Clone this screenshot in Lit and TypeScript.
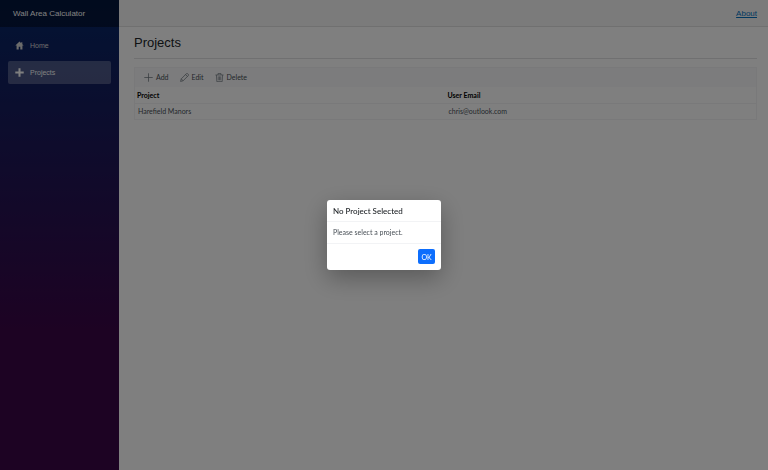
import { LitElement, html, css, svg } from "lit";
import { customElement, state } from "lit/decorators.js";

interface Project {
  name: string;
  email: string;
}

const icons = {
  home: svg`<path d="M8 1 0.6 8h2.2v7h3.8v-4.6h2.8V15h3.8V8h2.2L13 5.6V2h-2v1.8z" fill="currentColor"/>`,
  plus: svg`<path d="M6.2 0.500h3.6v5.7h5.700v3.6H9.800V15.500H6.200V9.800H0.500V6.200h5.700z" fill="currentColor"/>`,
  add: svg`<path d="M8 0.500v15M0.500 8h15" stroke="currentColor" stroke-width="1.300" fill="none"/>`,
  edit: svg`<path d="M1 15l1.200-4.600L11.400 1.200a1.500 1.500 0 0 1 2.100 0l1.300 1.300a1.500 1.500 0 0 1 0 2.100L5.600 13.800zM9.800 2.800l3.400 3.400M2.200 10.400l3.400 3.400" stroke="currentColor" stroke-width="1.300" fill="none"/>`,
  trash: svg`<path d="M0.800 3.500h14.400M5.300 3.500V1h5.400v2.500M2.500 3.500l.7 11.800h9.600l.7-11.800M5.800 6v7M8 6v7M10.200 6v7" stroke="currentColor" stroke-width="1.200" fill="none"/>`,
};

const icon = (shape: unknown) =>
  html`<svg viewBox="0 0 16 16" aria-hidden="true">${shape}</svg>`;

@customElement("app-root")
export class AppRoot extends LitElement {
  @state() private dialogOpen = true;

  private projects: Project[] = [
    { name: "Harefield Manors", email: "chris@outlook.com" },
  ];

  static styles = css`
    :host {
      display: grid;
      grid-template-columns: 119px 1fr;
      min-height: 100vh;
      background: #fff;
      color: #212529;
      font: 7px/10px "Liberation Sans", Arial, sans-serif;
    }
    * {
      box-sizing: border-box;
    }
    svg {
      display: block;
      flex: none;
      width: 9px;
      height: 9px;
    }
    .sidebar {
      background: linear-gradient(180deg, #052767 0%, #3a0647 70%);
    }
    .brand {
      display: flex;
      align-items: center;
      height: 27px;
      padding: 0 13px;
      background: rgba(0, 0, 0, 0.4);
    }
    .brand a {
      color: #fff;
      font-size: 8px;
      text-decoration: none;
    }
    .nav {
      display: flex;
      flex-direction: column;
      gap: 4px;
      padding: 7px 8px;
    }
    .nav a {
      display: flex;
      align-items: center;
      gap: 6px;
      height: 23px;
      padding: 0 7px;
      border-radius: 2px;
      color: #d7d7d7;
      text-decoration: none;
    }
    .nav a.active {
      background: rgba(255, 255, 255, 0.25);
      color: #fff;
    }
    .topbar {
      display: flex;
      align-items: center;
      justify-content: flex-end;
      height: 27px;
      padding: 2px 11px 0;
      background: #f7f7f7;
      border-bottom: 1px solid #e0e0e0;
    }
    .topbar a {
      color: #0071c1;
      font-size: 8px;
    }
    .content {
      padding: 8px 11px 8px 15px;
    }
    h1 {
      margin: 0;
      font-size: 13px;
      line-height: 16px;
      font-weight: 400;
    }
    hr {
      height: 1px;
      margin: 7px 0 8px;
      border: 0;
      background: #e0e0e2;
    }
    .grid {
      border: 1px solid #f2f3f5;
      font-family: "Lato", "Noto Sans", sans-serif;
    }
    .toolbar {
      display: flex;
      align-items: center;
      gap: 11px;
      height: 19px;
      padding: 0 9px 1px;
      background: #f8f9fa;
    }
    .toolbar button {
      display: flex;
      align-items: center;
      gap: 3px;
      padding: 0;
      border: 0;
      background: none;
      color: #495057;
      font: inherit;
    }
    .toolbar svg {
      color: #6c757d;
    }
    table {
      width: 100%;
      table-layout: fixed;
      border-collapse: collapse;
    }
    th,
    td {
      height: 16px;
      padding: 0 3px;
      text-align: left;
      color: #495057;
    }
    th {
      padding: 0 2px;
      border-bottom: 1px solid #f2f3f5;
      color: #000;
      font-weight: 700;
    }
    .backdrop {
      position: fixed;
      inset: 0;
      display: grid;
      place-items: center;
      background: rgba(0, 0, 0, 0.5);
    }
    .dialog {
      width: 114px;
      border-radius: 3px;
      background: #fff;
      box-shadow: 0 8px 24px rgba(0, 0, 0, 0.3);
      font-family: "Lato", "Noto Sans", sans-serif;
    }
    .dialog h2 {
      margin: 0;
      padding: 6px 6px 5px;
      border-bottom: 1px solid #f2f3f5;
      font-size: 8px;
      line-height: 10px;
      font-weight: 500;
    }
    .dialog p {
      margin: 0;
      padding: 5px 6px 6px;
      border-bottom: 1px solid #f2f3f5;
      color: #495057;
    }
    .actions {
      display: flex;
      justify-content: flex-end;
      padding: 5px 6px 6px;
    }
    .actions button {
      width: 17px;
      height: 15px;
      padding: 0;
      border: 0;
      border-radius: 2px;
      background: #0d6efd;
      color: #fff;
      font: inherit;
    }
  `;

  private closeDialog() {
    this.dialogOpen = false;
  }

  private requireSelection() {
    this.dialogOpen = true;
  }

  render() {
    return html`
      <aside class="sidebar">
        <div class="brand"><a href="#">Wall Area Calculator</a></div>
        <nav class="nav">
          <a href="#home">${icon(icons.home)}Home</a>
          <a href="#projects" class="active" aria-current="page">${icon(icons.plus)}Projects</a>
        </nav>
      </aside>
      <main>
        <header class="topbar"><a href="#about">About</a></header>
        <section class="content">
          <h1>Projects</h1>
          <hr />
          <div class="grid">
            <div class="toolbar" role="toolbar">
              <button type="button">${icon(icons.add)}Add</button>
              <button type="button" @click=${this.requireSelection}>${icon(icons.edit)}Edit</button>
              <button type="button" @click=${this.requireSelection}>${icon(icons.trash)}Delete</button>
            </div>
            <table>
              <thead>
                <tr><th scope="col">Project</th><th scope="col">User Email</th></tr>
              </thead>
              <tbody>
                ${this.projects.map(
                  (p) => html`<tr><td>${p.name}</td><td>${p.email}</td></tr>`
                )}
              </tbody>
            </table>
          </div>
        </section>
      </main>
      ${this.dialogOpen
        ? html`<div class="backdrop">
            <div class="dialog" role="dialog" aria-modal="true" aria-labelledby="dialog-title">
              <h2 id="dialog-title">No Project Selected</h2>
              <p>Please select a project.</p>
              <div class="actions">
                <button type="button" @click=${this.closeDialog}>OK</button>
              </div>
            </div>
          </div>`
        : null}
    `;
  }
}
